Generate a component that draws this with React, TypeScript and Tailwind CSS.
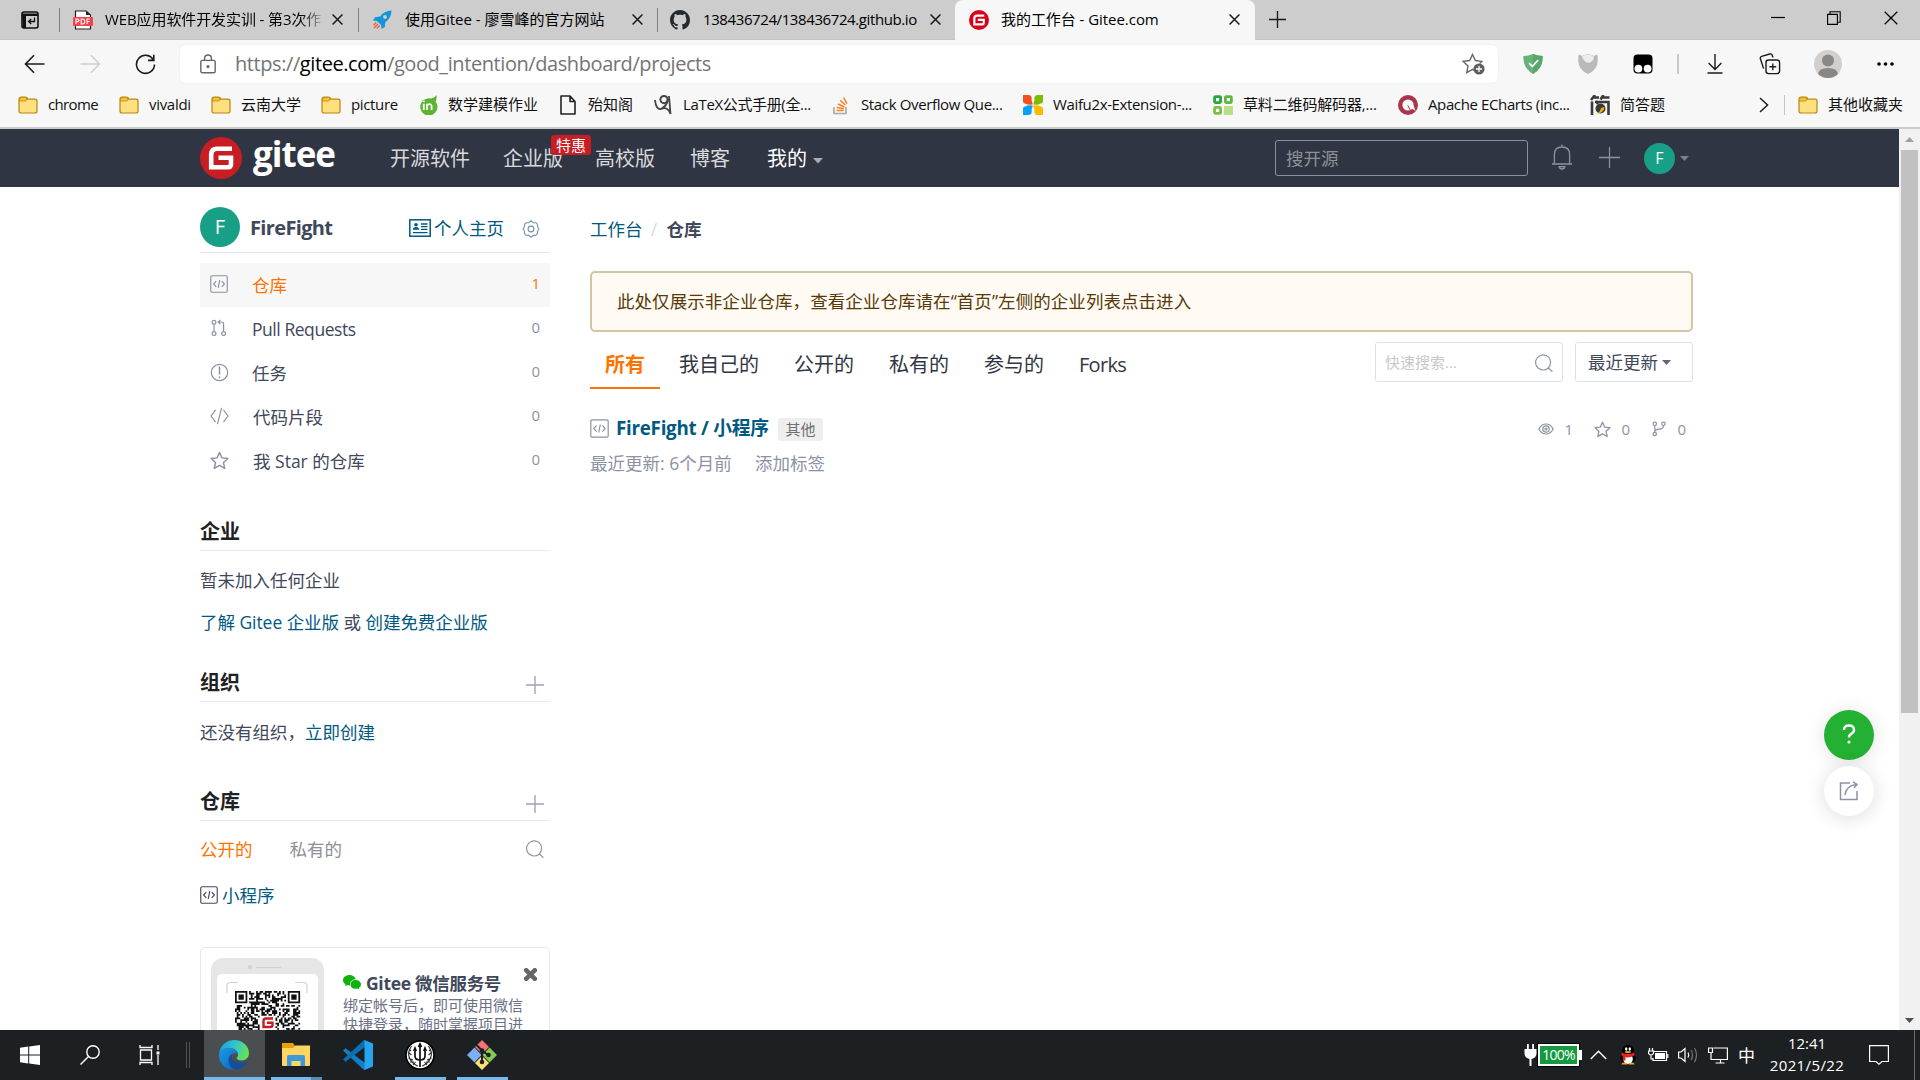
import React from 'react';

type Kids = { children?: React.ReactNode; className?: string };

const FolderIcon = () => (
  <svg width="20" height="18" viewBox="0 0 20 18" className="shrink-0">
    <path d="M1 3.2Q1 1 3.2 1H7.2Q9.4 1 9.4 2.8V3.2H17Q19 3.2 19 5V15Q19 17 17 17H3Q1 17 1 15Z" fill="#ffe07f" stroke="#b8860f" strokeWidth="1.2" />
    <path d="M1.6 3.2Q1.6 1.6 3.2 1.6H7Q8.8 1.6 8.8 3Q8.8 5 7 5H1.6Z" fill="#fcc537" stroke="#b8860f" strokeWidth=".8" />
  </svg>
);

const GiteeMark = ({ size, bg }: { size: number; bg: string }) => (
  <svg width={size} height={size} viewBox="0 0 42 42" className="shrink-0">
    <circle cx="21" cy="21" r="21" fill={bg} />
    <path d="M32 11.800H17Q11.200 11.800 11.200 17.600V30.200H28Q31 30.200 31 27V20.800H18.500" fill="none" stroke="#fff" strokeWidth="4.600" />
  </svg>
);

const PdfIcon = () => (
  <svg width="20" height="20" viewBox="0 0 20 20" className="shrink-0">
    <path d="M2.5 1H13L17.5 5V19H2.5Z" fill="#fff" stroke="#222" strokeWidth="1.2" />
    <path d="M13 1V5H17.5Z" fill="#222" />
    <rect x="0" y="7" width="20" height="9" rx="1" fill="#f4434a" />
    <path d="M3 14V9H4.7Q6 9 6 10.3T4.7 11.6H3M8.2 9V14H9.4Q11.7 14 11.7 11.5T9.4 9ZM14 14V9H17M14 11.5H16.6" fill="none" stroke="#fff" strokeWidth="1.1" />
  </svg>
);

const RocketIcon = () => (
  <svg width="20" height="20" viewBox="0 0 20 20" className="shrink-0">
    <path d="M19.5 .5Q12 .8 8 6.5L3 7.2L1 10.5L5 11L9 15L9.6 19L12.8 17L13.5 12Q19.5 8 19.5 .5Z" fill="#1296db" />
    <circle cx="13" cy="7" r="1.9" fill="#cdcdcd" />
    <path d="M4.2 12.5L1.5 15.2M6 14L2 18M7.6 15.6L5 18.4" stroke="#e8603c" strokeWidth="1.4" />
  </svg>
);

const GithubIcon = () => (
  <svg width="20" height="20" viewBox="0 0 16 16" className="shrink-0">
    <path fill="#24292e" d="M8 0C3.58 0 0 3.58 0 8c0 3.54 2.29 6.53 5.47 7.59.4.07.55-.17.55-.38 0-.19-.01-.82-.01-1.49-2.01.37-2.53-.49-2.69-.94-.09-.23-.48-.94-.82-1.13-.28-.15-.68-.52-.01-.53.63-.01 1.08.58 1.23.82.72 1.21 1.87.87 2.33.66.07-.52.28-.87.51-1.07-1.78-.2-3.64-.89-3.64-3.95 0-.87.31-1.59.82-2.15-.08-.2-.36-1.02.08-2.12 0 0 .67-.21 2.2.82.64-.18 1.32-.27 2-.27s1.36.09 2 .27c1.53-1.04 2.2-.82 2.2-.82.44 1.1.16 1.92.08 2.12.51.56.82 1.27.82 2.15 0 3.07-1.87 3.75-3.65 3.95.29.25.54.73.54 1.48 0 1.07-.01 1.93-.01 2.2 0 .21.15.46.55.38A8.01 8.01 0 0 0 16 8c0-4.42-3.58-8-8-8Z" />
  </svg>
);

const Cross = ({ s = 11, c = '#1b1b1b', w = 1.4 }: { s?: number; c?: string; w?: number }) => (
  <svg width={s} height={s} viewBox="0 0 10 10" className="shrink-0"><path d="M.5 .5L9.5 9.5M9.5 .5L.5 9.5" stroke={c} strokeWidth={w} fill="none" /></svg>
);

const Plus = ({ s, c, w = 1.3 }: { s: number; c: string; w?: number }) => (
  <svg width={s} height={s} viewBox="0 0 20 20" className="shrink-0"><path d="M10 0V20M0 10H20" stroke={c} strokeWidth={w} /></svg>
);

const Search = ({ s = 18, c = '#9095a5' }: { s?: number; c?: string }) => (
  <svg width={s} height={s} viewBox="0 0 18 18" className="shrink-0"><path d="M15.6 8.2A7.5 7.5 0 1 1 11.5 1.5M11.5 1.5A7.5 7.5 0 0 1 15.6 8.2M13.2 13.4L17.4 17.4" transform="translate(0 .3)" fill="none" stroke={c} strokeWidth="1.2" /></svg>
);

const Caret = ({ w, c }: { w: number; c: string }) => (
  <svg width={w} height={w / 2 + 0.5} viewBox="0 0 10 5.5" className="shrink-0"><path d="M0 0H10L5 5.5Z" fill={c} /></svg>
);

const RepoIcon = ({ c, s = 19 }: { c: string; s?: number }) => (
  <svg width={s} height={s} viewBox="0 0 19 19" fill="none" stroke={c} strokeWidth="1.2" className="shrink-0">
    <rect x=".8" y=".8" width="17.4" height="17.4" rx="1.5" />
    <path d="M6.6 6.4L3.8 9.5L6.6 12.6M12.4 6.4L15.2 9.5L12.4 12.6M10.3 5.5L8.7 13.5" />
  </svg>
);

const Star = ({ s, c }: { s: number; c: string }) => (
  <svg width={s} height={s} viewBox="0 0 20 20" className="shrink-0"><path d="M10 1.5L12.6 7.2L18.8 7.9L14.2 12.1L15.5 18.3L10 15.1L4.5 18.3L5.8 12.1L1.2 7.9L7.4 7.2Z" fill="none" stroke={c} strokeWidth="1.5" strokeLinejoin="round" /></svg>
);

/* ---------- browser tabs ---------- */

const VLine = () => <div className="h-6 w-px shrink-0 bg-[#7f7f7f]" />;

const TabStrip = () => (
  <div className="flex h-10 shrink-0 items-center border-b border-[#c4c4c4] bg-[#cdcdcd] text-[15px] text-black">
    <div className="flex w-[59px] shrink-0 pl-[21px]">
      <svg width="18" height="18" viewBox="0 0 18 18"><rect x="1" y="1" width="16" height="16" rx="2" fill="none" stroke="#111" strokeWidth="1.6" /><path d="M1 2.5H17V5H5V17H2Z" fill="#111" /><path d="M13.5 6.5V10.5H8M10.2 8L7.6 10.5L10.2 13" fill="none" stroke="#111" strokeWidth="1.3" /></svg>
    </div>
    <VLine />
    <div className="flex w-[298px] shrink-0 items-center pl-[13px]">
      <PdfIcon />
      <div className="ml-3 w-[218px] whitespace-nowrap bg-gradient-to-r from-black from-88% to-[#bbb] bg-clip-text tracking-[-0.1px] text-transparent">WEB应用软件开发实训 - 第3次作</div>
      <div className="ml-[9px] flex"><Cross /></div>
    </div>
    <VLine />
    <div className="flex w-[298px] shrink-0 items-center pl-[13px]">
      <RocketIcon />
      <div className="ml-[13px] w-[227px] whitespace-nowrap">使用Gitee - 廖雪峰的官方网站</div>
      <Cross />
    </div>
    <VLine />
    <div className="flex w-[297px] shrink-0 items-center pl-3">
      <GithubIcon />
      <div className="ml-[13px] w-[227px] whitespace-nowrap tracking-[-0.4px]">138436724/138436724.github.io</div>
      <Cross />
    </div>
    <div className="-mb-px flex h-10 w-[300px] shrink-0 items-center rounded-t-lg bg-[#f7f7f7] pb-px pl-[14px]">
      <GiteeMark size={20} bg="#d9001b" />
      <div className="ml-3 w-[228px] whitespace-nowrap tracking-[-0.05px]">我的工作台 - Gitee.com</div>
      <Cross />
    </div>
    <div className="ml-[14px] flex"><Plus s={17} c="#1b1b1b" w={1.6} /></div>
    <div className="ml-auto flex items-start pb-[3px]">
      <svg width="14" height="14" className="mr-[42px]"><path d="M0 6.5H14" stroke="#000" strokeWidth="1.2" /></svg>
      <svg width="14" height="14" className="mr-[43px]" fill="none" stroke="#000" strokeWidth="1.1"><path d="M.6 3.4H10.4V13.4H.6ZM3 3.2V.8H13.2V11.2H10.6" /></svg>
      <div className="mr-[22px] flex"><Cross s={14} w={0.9} c="#000" /></div>
    </div>
  </div>
);

/* ---------- address bar ---------- */

const AddressBar = () => (
  <div className="flex h-[48px] shrink-0 items-center">
    <svg width="21" height="20" viewBox="0 0 21 20" className="ml-6 shrink-0" fill="none" stroke="#1b1b1b" strokeWidth="1.6"><path d="M20.5 10H1.5M10 1.2L1.5 10L10 18.8" /></svg>
    <svg width="21" height="20" viewBox="0 0 21 20" className="ml-[35px] shrink-0" fill="none" stroke="#cfcfcf" strokeWidth="1.6"><path d="M.5 10H19.5M11 1.2L19.5 10L11 18.8" /></svg>
    <svg width="21" height="21" viewBox="0 0 21 21" className="ml-[34px] shrink-0" fill="none" stroke="#1b1b1b" strokeWidth="1.6"><path d="M18.5 6.2A9 9 0 1 0 19.5 10.5M18.8 .8V6.4H13" /></svg>
    <div className="ml-[24px] flex h-[38px] w-[1318px] shrink-0 items-center rounded-md bg-white shadow-[0_0_2px_rgba(0,0,0,0.08)]">
      <svg width="16" height="20" viewBox="0 0 16 20" className="ml-5 shrink-0" fill="none" stroke="#666" strokeWidth="1.4"><rect x=".8" y="6.4" width="14.4" height="12.4" rx="1.5" /><path d="M4.6 6.4V4.2Q4.6 1 8 1T11.4 4.2V6.4" /><circle cx="8" cy="12.6" r=".9" fill="#666" /></svg>
      <div className="ml-[19px] whitespace-nowrap text-[20px] tracking-[-0.42px] text-[#747474]">https://<span className="text-black">gitee.com</span>/good_intention/dashboard/projects</div>
      <svg width="23" height="22" viewBox="0 0 23 22" className="ml-auto mr-[13px] shrink-0"><path d="M12 17.5L10.5 16.4L4.8 19.6L6 13L1.2 8.4L7.6 7.5L10.5 1.5L13.4 7.5L19.8 8.4L17.6 10.5" fill="none" stroke="#666" strokeWidth="1.4" /><circle cx="17" cy="16" r="5.6" fill="#5f5f5f" /><path d="M17 13V19M14 16H20" stroke="#fff" strokeWidth="1.3" /></svg>
    </div>
    <svg width="20" height="20" viewBox="0 0 20 20" className="ml-[25px] shrink-0"><path d="M10 0Q15 2 19.6 2Q20.5 14 10 20Q-.5 14 .4 2Q5 2 10 0Z" fill="#67b279" /><path d="M10 0Q15 2 19.6 2Q20.5 14 10 20Z" fill="#5aa76d" /><path d="M6 9L9.3 12.6L15.2 6" fill="none" stroke="#fff" strokeWidth="1.7" /></svg>
    <svg width="20" height="20" viewBox="0 0 20 20" className="ml-[35px] shrink-0"><path d="M.4 4Q-.2 1 1.5 .5L4 2Q10 -1.500 16 2L18.500 .5Q20.200 1 19.600 4Q21 15 10 20Q-1 15 .4 4Z" fill="#b9b9b9" /><path d="M4 2.200Q10 -.5 15.500 2Q16.500 7 11.500 8.800Q6 9 4 2.200Z" fill="#ededed" /></svg>
    <svg width="20" height="20" viewBox="0 0 20 20" className="ml-[35px] shrink-0"><rect x=".5" y=".5" width="19" height="19" rx="4" fill="#000" /><circle cx="5.4" cy="14.6" r="3.9" fill="#fff" /><circle cx="14.6" cy="14.6" r="3.9" fill="#fff" /></svg>
    <div className="ml-6 h-5 w-0.5 shrink-0 bg-[#c9c9c9]" />
    <svg width="16" height="20" viewBox="0 0 16 20" className="ml-7 shrink-0" fill="none" stroke="#1b1b1b" strokeWidth="1.4"><path d="M8 0V15M1.6 9L8 15.4L14.4 9M.5 19H15.5" /></svg>
    <svg width="22" height="22" viewBox="0 0 22 22" className="ml-[36px] shrink-0" fill="none" stroke="#1b1b1b" strokeWidth="1.4"><rect x="7" y="7" width="13.6" height="13.6" rx="2.5" /><path d="M13.8 10.4V17.2M10.4 13.8H17.2M4.6 15.6L1.4 5.8Q.8 4 2.6 3.3L10.8 1Q12.6.5 13.2 2.3L14 4.6" /></svg>
    <svg width="28" height="28" viewBox="0 0 28 28" className="ml-[33px] shrink-0"><circle cx="14" cy="14" r="14" fill="#d2cfcc" /><circle cx="14" cy="10.5" r="6" fill="#8a8683" /><path d="M4 24Q5 18 14 18T24 24Q20 28 14 28T4 24Z" fill="#8a8683" /></svg>
    <svg width="17" height="4" className="ml-[35px] shrink-0"><circle cx="2" cy="2" r="1.8" /><circle cx="8.5" cy="2" r="1.8" /><circle cx="15" cy="2" r="1.8" /></svg>
  </div>
);

/* ---------- bookmarks ---------- */

const Mark = ({ icon, w, children, className = '' }: { icon: React.ReactNode; w: string; children: React.ReactNode; className?: string }) => (
  <div className={`flex h-full shrink-0 items-center ${w}`}>
    <span className="mr-[10px] flex w-5 shrink-0 justify-center">{icon}</span>
    <span className={`whitespace-nowrap pb-px ${className}`}>{children}</span>
  </div>
);

const Bookmarks = () => (
  <div className="flex h-[41px] shrink-0 items-center border-b-2 border-[#cbcbcb] bg-[#f7f7f7] pb-[5px] pl-[18px] text-[15px] text-[#111]">
    <Mark w="w-[101px]" icon={<FolderIcon />} className="tracking-[-0.65px]">chrome</Mark>
    <Mark w="w-[92px]" icon={<FolderIcon />} className="tracking-[-0.3px]">vivaldi</Mark>
    <Mark w="w-[110px]" icon={<FolderIcon />}>云南大学</Mark>
    <Mark w="w-[97px]" icon={<FolderIcon />} className="tracking-[-0.35px]">picture</Mark>
    <Mark w="w-[140px]" icon={<svg width="20" height="20" viewBox="0 0 20 20"><path d="M18.5 0Q19 4 17.5 6.5A8.6 8.6 0 1 1 12.5 3.5Q16 3.5 18.5 0Z" fill="#5cb531" /><path d="M5.8 8.8V15M5.8 5.8V7.2M9 15V8.8M9 11Q9.4 9.2 11.4 9.2T13.6 11.4V15" fill="none" stroke="#fff" strokeWidth="1.8" /></svg>}>数学建模作业</Mark>
    <Mark w="w-[95px]" icon={<svg width="16" height="20" viewBox="0 0 16 20" fill="none" stroke="#222" strokeWidth="1.6"><path d="M1 1H10L15 6.5V19H1ZM10 1V6.5H15" strokeLinejoin="round" /></svg>}>殆知阁</Mark>
    <Mark w="w-[178px]" className="tracking-[-0.35px]" icon={<svg width="18" height="20" viewBox="0 0 18 20" fill="none" stroke="#444" strokeWidth="2"><circle cx="10" cy="4.6" r="3.6" /><path d="M14 4Q13 11 7 14Q2 15 1 5M7 14Q14 11 16.5 19M15 1L16.5 19" strokeWidth="1.8" /></svg>}>LaTeX公式手册(全...</Mark>
    <Mark w="w-[192px]" className="tracking-[-0.36px]" icon={<svg width="16" height="20" viewBox="0 0 16 20" fill="none"><path d="M1 12V18.5H13V12" stroke="#a7a9ac" strokeWidth="1.6" /><path d="M3.6 15.6H10.6M3.8 12.4L10.8 13.8M5 9L11.4 12M7.2 5.4L12.4 10M10.6 2.6L14 8.6" stroke="#f48024" strokeWidth="1.5" /></svg>}>Stack Overflow Que...</Mark>
    <Mark w="w-[190px]" className="tracking-[-0.36px]" icon={<svg width="20" height="20" viewBox="0 0 20 20"><path d="M0 0H6Q9.600 1 8.500 5Q10 9.600 9.600 9.600Q4 10 2.500 8.500Q0 9 0 6Z" fill="#f25022" /><path d="M20 0H14Q10.400 1 11.500 5Q10 9.600 10.400 9.600Q16 10 17.500 8.500Q20 9 20 6Z" fill="#7fba00" /><path d="M0 20H6Q9.600 19 8.500 15Q10 10.400 9.600 10.400Q4 10 2.500 11.500Q0 11 0 14Z" fill="#00a4ef" /><path d="M20 20H14Q10.400 19 11.500 15Q10 10.400 10.400 10.400Q16 10 17.500 11.500Q20 11 20 14Z" fill="#ffb900" /></svg>}>Waifu2x-Extension-...</Mark>
    <Mark w="w-[185px]" className="tracking-[-0.15px]" icon={<svg width="20" height="20" viewBox="0 0 20 20" fill="none" strokeWidth="2.800"><rect x="1.600" y="1.600" width="6" height="6" rx="1" stroke="#27a53f" /><rect x="12.400" y="1.600" width="6" height="6" rx="1" stroke="#5db83a" /><rect x="1.600" y="12.400" width="6" height="6" rx="1" stroke="#7cc142" /><rect x="11" y="11" width="9" height="9" rx="1" fill="#b9de8a" /></svg>}>草料二维码解码器,...</Mark>
    <Mark w="w-[192px]" className="tracking-[-0.38px]" icon={<svg width="20" height="20" viewBox="0 0 20 20"><circle cx="10" cy="10" r="10" fill="#aa344d" /><circle cx="10" cy="10" r="5.6" fill="#f7f7f7" /><path d="M9.5 10.5L15.5 10.5L17.5 16Z" fill="#fff" /><path d="M9.8 10.4L12.4 15.4" stroke="#aa344d" strokeWidth="1" /></svg>}>Apache ECharts (inc...</Mark>
    <Mark w="w-[167px]" icon={<svg width="20" height="20" viewBox="0 0 20 20" fill="none" stroke="#3a3a3a" strokeWidth="2.600"><path d="M5 0L1 5M3 2.500H9M13.500 0L10.500 4.500M12 2.500H19.500M2 6.500V20M5 7H18.500V20M6 6L8 9" /><circle cx="10.500" cy="13.500" r="5" fill="#3a3a3a" stroke="none" /><path d="M6 19Q10 18 11 13L14.500 12Q14 18 6 19Z" fill="#f2b200" stroke="none" /></svg>}>简答题</Mark>
    <svg width="10" height="16" viewBox="0 0 10 16" className="ml-[2px] shrink-0" fill="none" stroke="#1b1b1b" strokeWidth="1.5"><path d="M1 1L8.6 8L1 15" /></svg>
    <div className="ml-[15px] mr-[13px] h-5 w-px shrink-0 bg-[#c4c4c4]" />
    <Mark w="w-[110px]" icon={<FolderIcon />}>其他收藏夹</Mark>
  </div>
);

/* ---------- site header ---------- */

const SiteHeader = () => (
  <div className="flex h-[58px] shrink-0 items-center bg-[#2f3542] pl-[200px] text-[20px] text-[#d8d9dc]">
    <GiteeMark size={42} bg="#c71d23" />
    <div className="-mt-[9px] ml-[11px] w-[137px] text-[35px] font-bold leading-none tracking-[-1px] text-white">gitee</div>
    <div className="w-[113px] pt-[2px]">开源软件</div>
    <div className="flex w-[92px] items-start pt-[2px]">
      企业版
      <span className="relative z-10 -ml-3 -mt-[9px] flex h-5 w-10 shrink-0 items-center justify-center rounded-[3px] bg-[#c71d23] text-[15px] text-white">特惠</span>
    </div>
    <div className="w-[95px] pt-[2px]">高校版</div>
    <div className="w-[77px] pt-[2px]">博客</div>
    <div className="pt-[2px] text-white">我的</div>
    <div className="ml-[6px] mt-[6px] flex"><Caret w={10} c="#a9acb5" /></div>
    <div className="ml-[452px] flex h-[36px] w-[253px] shrink-0 items-center rounded-[3px] border border-[#8c92a4] pl-[10px] text-[17.5px] text-[#8f9197]">搜开源</div>
    <svg width="20" height="26" viewBox="0 0 20 26" className="-mt-[2px] ml-6 shrink-0" fill="none" stroke="#8c92a4" strokeWidth="1.3"><path d="M0 20H20M2.400 20V10.500Q2.400 3 10 3T17.600 10.500V20M10 3V.6M7.200 22.600Q7.500 25 10 25T12.800 22.600Z" /></svg>
    <div className="-mt-px ml-[27px] flex"><Plus s={21} c="#8c92a4" w={1.2} /></div>
    <div className="ml-6 flex size-[31px] shrink-0 items-center justify-center rounded-full bg-[#17a086] text-[16px] text-white">F</div>
    <div className="ml-[5px] flex"><Caret w={9} c="#7a8194" /></div>
  </div>
);

/* ---------- sidebar ---------- */

const NavRow = ({ icon, label, n, active, className = '' }: { icon: React.ReactNode; label: string; n: number; active?: boolean; className?: string }) => (
  <div className={`flex h-11 items-center pl-[10px] pr-[10px] ${active ? 'bg-[#f7f7f7] text-[#fe7300]' : 'text-[#40485b]'}`}>
    <span className="flex w-[42px] pb-[2px]">{icon}</span>
    <span className={`pt-px ${className}`}>{label}</span>
    <span className={`ml-auto pb-1 text-[15px] ${active ? '' : 'text-[#8c92a4]'}`}>{n}</span>
  </div>
);

const Heading = ({ title, plus, className = '' }: { title: string; plus?: boolean; className?: string }) => (
  <div className={`flex h-[38px] shrink-0 items-center border-b border-[#e3e9ed] pr-[6px] text-[20px] font-bold text-[#212121] ${className}`}>
    {title}
    {plus && <span className="ml-auto flex pt-[5px]"><Plus s={18} c="#9da2b3" w={1.5} /></span>}
  </div>
);

const MODULES = 37;
const isFinder = (x: number, y: number) => {
  const fx = x > MODULES / 2 ? MODULES - 1 - x : x;
  if (fx > 7 || y > 7) return null;
  if (fx === 7 || y === 7) return false;
  const d = Math.max(Math.abs(fx - 3), Math.abs(y - 3));
  return d !== 2;
};
const qrPath = () => {
  let d = '';
  let seed = 20210522;
  for (let y = 0; y < 24; y++) {
    for (let x = 0; x < MODULES; x++) {
      seed = (seed * 1103515245 + 12345) % 2147483648;
      const f = isFinder(x, y);
      const on = f === null ? seed / 2147483648 > 0.47 : f;
      if (on && !(x > 13 && x < 23 && y > 13)) d += `M${x} ${y}h1v1h-1z`;
    }
  }
  return d;
};

const WechatCard = () => (
  <div className="mt-[39px] flex h-[160px] shrink-0 items-start rounded-[5px] border border-[#e3e9ed] pl-[10px] pt-[10px]">
    <div className="h-[200px] w-[113px] shrink-0 rounded-t-[12px] bg-[#e6e6e6] pl-[6px] pt-2">
      <div className="ml-[31px] flex h-[2px] items-center gap-1"><span className="size-1 rounded-full bg-[#d0d0d0]" /><span className="h-px w-[25px] bg-[#d0d0d0]" /></div>
      <svg width="101" height="100" viewBox="0 0 101 100" className="mt-[6px] rounded-t-[5px] bg-white">
        <path d="M10 19V12Q10 8.500 13.500 8.500H21M78 8.500H86Q90 8.500 90 12V19" fill="none" stroke="#cfcfcf" strokeWidth="1.200" />
        <path d={qrPath()} transform="translate(18 17) scale(1.76)" fill="#111" />
        <path d="M56 44.500H49Q46.500 44.500 46.500 47V53H53Q55.500 53 55.500 51V48.700H50" fill="none" stroke="#c71d23" strokeWidth="2.400" />
      </svg>
    </div>
    <div className="ml-[19px] w-[181px] pt-3">
      <div className="flex h-[26px] items-center text-[17.5px] font-bold tracking-[-0.3px] text-[#40485b]">
        <svg width="18" height="16" viewBox="0 0 18 16" className="mr-[5px] shrink-0"><path d="M6.500 0C2.900 0 0 2.300 0 5.200C0 6.900 1 8.300 2.500 9.300L1.900 11.200L4.200 10.100Q5.300 10.400 6.500 10.400L7 10.300C6.500 6.700 9.500 4.300 12.800 4.300C12.200 1.800 9.600 0 6.500 0Z" fill="#0eb30e" /><path d="M12.600 5C9.600 5 7.500 7 7.500 9.400S9.700 13.800 12.600 13.800Q13.600 13.800 14.400 13.500L16.400 14.600L15.900 12.900Q18 11.600 18 9.400C18 7 15.600 5 12.600 5Z" fill="#0eb30e" /></svg>
        Gitee 微信服务号
      </div>
      <div className="whitespace-nowrap text-[15px] leading-[19px] text-[#6b7185]">绑定帐号后，即可使用微信<br />快捷登录，随时掌握项目进</div>
    </div>
    <div className="flex pt-[10px]"><Cross s={13} w={3.4} c="#666" /></div>
  </div>
);

const Sidebar = () => (
  <div className="flex w-[350px] shrink-0 flex-col text-[17.5px] text-[#40485b]">
    <div className="flex h-[66px] shrink-0 items-center border-b border-[#dfe7ee] pt-[14px]">
      <div className="flex size-10 shrink-0 items-center justify-center rounded-full bg-[#17a086] text-[20px] text-white">F</div>
      <div className="ml-[10px] w-[159px] pt-[2px] text-[20px] font-bold tracking-[-0.65px]">FireFight</div>
      <svg width="22" height="18" viewBox="0 0 22 18" className="mt-[3px] shrink-0" fill="none" stroke="#005980"><rect x=".8" y=".8" width="20.4" height="16.4" strokeWidth="1.500" /><circle cx="7" cy="5.800" r="1.800" fill="#005980" stroke="none" /><path d="M3.800 10.800Q4 8 7 8T10.200 10.800Z" fill="#005980" stroke="none" /><path d="M12 5H18.500M12 7.700H18.500M12 10.400H18.500M3.800 13.600H18.500" strokeWidth="1.300" /></svg>
      <div className="ml-[3px] pt-[3px] text-[#005980]">个人主页</div>
      <svg width="18" height="18" viewBox="0 0 18 18" className="ml-[18px] mt-[4px] shrink-0" fill="none" stroke="#6f93a8" strokeWidth="1.100"><path d="M9 .8L11.200 2.600L14 2.800L15.500 4.400L15.600 7L17 9L15.600 11L15.500 13.600L14 15.200L11.200 15.400L9 17.200L6.800 15.400L4 15.200L2.500 13.600L2.400 11L1 9L2.400 7L2.500 4.400L4 2.800L6.800 2.600Z" strokeLinejoin="round" /><circle cx="9" cy="9" r="2.900" /></svg>
    </div>
    <div className="mt-[10px] shrink-0">
      <NavRow active icon={<RepoIcon s={18} c="#8c92a4" />} label="仓库" n={1} />
      <NavRow icon={<svg width="18" height="18" viewBox="0 0 18 18" fill="none" stroke="#8c92a4" strokeWidth="1.200"><circle cx="4" cy="3.200" r="1.900" /><circle cx="4" cy="14.600" r="1.900" /><circle cx="13.600" cy="14.600" r="1.900" /><path d="M4 5.200V12.600M13.600 12.600V5Q13.600 3 11.600 3H8M10.400 .8L8.200 3L10.400 5.200" /></svg>} label="Pull Requests" n={0} className="tracking-[-0.45px]" />
      <NavRow icon={<svg width="19" height="19" viewBox="0 0 19 19" fill="none" stroke="#8c92a4" strokeWidth="1.200"><circle cx="9.500" cy="9.500" r="8.200" /><path d="M9.500 3.600V11.500M9.500 13.500V15.200" strokeWidth="1.500" /></svg>} label="任务" n={0} />
      <NavRow icon={<svg width="19" height="18" viewBox="0 0 19 18" fill="none" stroke="#8c92a4" strokeWidth="1.200"><path d="M5.500 2.800L1 9L5.500 15.200M13.500 2.800L18 9L13.500 15.200M11.600 .8L7.400 17.200" /></svg>} label="代码片段" n={0} className="pl-px" />
      <NavRow icon={<Star s={19} c="#8c92a4" />} label="我 Star 的仓库" n={0} className="pl-px" />
    </div>
    <Heading title="企业" className="mt-[30px]" />
    <div className="mt-4 h-[26px] shrink-0 leading-[26px]">暂未加入任何企业</div>
    <div className="mt-4 h-[26px] shrink-0 tracking-[-0.05px] leading-[26px]"><span className="text-[#005980]">了解 Gitee 企业版</span> 或 <span className="text-[#005980]">创建免费企业版</span></div>
    <Heading title="组织" plus className="mt-[29px]" />
    <div className="mt-[17px] h-[26px] shrink-0 leading-[26px]">还没有组织，<span className="text-[#005980]">立即创建</span></div>
    <Heading title="仓库" plus className="mt-[38px]" />
    <div className="mt-[15px] flex h-[26px] shrink-0 items-center">
      <span className="text-[#fe7300]">公开的</span>
      <span className="ml-[37px] text-[#8c8f96]">私有的</span>
      <span className="ml-auto mr-[6px] flex"><Search c="#8f97a3" /></span>
    </div>
    <div className="mt-5 flex h-[26px] shrink-0 items-center"><RepoIcon c="#40485b" s={18} /><span className="ml-1 text-[#005980]">小程序</span></div>
    <WechatCard />
  </div>
);

/* ---------- main column ---------- */

const TabItem = ({ children, className = '' }: Kids) => <div className={`flex h-12 shrink-0 items-center ${className}`}>{children}</div>;

const Main = () => (
  <div className="ml-10 flex w-[1103px] shrink-0 flex-col text-[17.5px]">
    <div className="mt-[28px] flex h-7 items-center text-[#40485b]">
      <span className="text-[#005980]">工作台</span>
      <span className="mx-[7px] w-[9px] text-center text-[#d5d7da]">/</span>
      <span className="ml-px font-bold">仓库</span>
    </div>
    <div className="mt-[28px] flex h-[61px] w-[1103px] items-center rounded-[5px] border-2 border-[#d3c4a4] bg-[#fffaf3] pl-[25px] tracking-[0.06px] text-[#573a08]">此处仅展示非企业仓库，查看企业仓库请在“首页”左侧的企业列表点击进入</div>
    <div className="mt-[9px] flex h-12 items-start text-[20px] text-[#303643]">
      <TabItem className="w-[70px] justify-center border-b-2 border-[#fe7300] pt-[2px] font-bold text-[#fe7300]">所有</TabItem>
      <TabItem className="ml-[19px] w-[115px]">我自己的</TabItem>
      <TabItem className="w-[95px]">公开的</TabItem>
      <TabItem className="w-[95px]">私有的</TabItem>
      <TabItem className="w-[95px]">参与的</TabItem>
      <TabItem className="tracking-[-0.7px]">Forks</TabItem>
      <div className="ml-auto mt-px flex h-10 w-[188px] shrink-0 items-center rounded-[3px] border border-[#dce3e8] pl-[9px] pr-[9px] text-[15px] text-[#c7c7c7]">快速搜索...<span className="ml-auto flex pt-px"><Search /></span></div>
      <div className="ml-3 mt-px flex h-10 w-[118px] shrink-0 items-center rounded-[3px] border border-[#dce3e8] pl-3 pt-px text-[17.5px] text-[#40485b]">最近更新<span className="ml-1 flex"><Caret w={9} c="#60677c" /></span></div>
    </div>
    <div className="mt-[25px] flex h-[28px] items-center">
      <RepoIcon c="#8c92a4" />
      <div className="ml-[7px] w-[162px] whitespace-nowrap text-[18.75px] font-bold tracking-[-0.25px] text-[#005980]">FireFight / 小程序</div>
      <div className="mt-[2px] flex h-[23px] w-[45px] items-center justify-center rounded-[3px] bg-[#eee] text-[15px] text-[#6f7075]">其他</div>
      <div className="ml-auto mt-[2px] flex items-center text-[15px] text-[#8c92a4]">
        <svg width="16" height="12" viewBox="0 0 16 12" fill="none" stroke="#8c92a4" strokeWidth="1.200"><path d="M.8 6Q3.500 1 8 1T15.200 6Q12.500 11 8 11T.8 6Z" /><circle cx="8" cy="6" r="3.200" /><circle cx="8" cy="6" r="1" /></svg>
        <span className="ml-[10px] w-[30px]">1</span>
        <Star s={17} c="#8c92a4" />
        <span className="ml-[10px] w-[31px]">0</span>
        <svg width="14" height="16" viewBox="0 0 14 16" fill="none" stroke="#8c92a4" strokeWidth="1.200"><circle cx="2.800" cy="2.800" r="1.700" /><circle cx="2.800" cy="13" r="1.700" /><circle cx="11.500" cy="2.800" r="1.700" /><path d="M2.800 4.500V11.300M11.500 4.500Q11.500 8 7 8.200Q2.800 8.500 2.800 11" /></svg>
        <span className="ml-[11px] mr-[7px]">0</span>
      </div>
    </div>
    <div className="mt-2 flex h-[26px] items-center text-[#8c92a4]"><span className="w-[165px] whitespace-nowrap">最近更新: 6个月前</span><span>添加标签</span></div>
  </div>
);

const ScrollBar = () => (
  <div className="flex w-[21px] shrink-0 flex-col items-center bg-[#f1f1f1]">
    <div className="flex h-[21px] items-center"><svg width="9" height="5"><path d="M0 5H9L4.500 0Z" fill="#a0a0a0" /></svg></div>
    <div className="h-[563px] w-[17px] bg-[#c1c1c1]" />
    <div className="mt-auto flex h-[19px] items-center"><svg width="9" height="5"><path d="M0 0H9L4.500 5Z" fill="#505050" /></svg></div>
  </div>
);

const FloatButtons = () => (
  <div className="absolute left-[1824px] top-[710px] flex flex-col gap-[6px]">
    <div className="flex size-[50px] items-center justify-center rounded-full bg-[#24b033] shadow-[0_2px_20px_rgba(0,0,0,0.12)]">
      <svg width="14" height="20" viewBox="0 0 14 20" className="-mt-[3px]"><path d="M2 6Q2 1.500 7 1.500T12 6Q12 8.300 9.500 9.600Q7 11 7 13.500" fill="none" stroke="#fff" strokeWidth="2.400" /><circle cx="7" cy="18" r="1.600" fill="#fff" /></svg>
    </div>
    <div className="flex size-[50px] items-center justify-center rounded-full bg-white shadow-[0_2px_20px_rgba(0,0,0,0.14)]">
      <svg width="20" height="20" viewBox="0 0 20 20" fill="none" stroke="#8c92a4" strokeWidth="1.500"><path d="M11 2H1.500V18.500H18V10M6 14Q7 5 17 3.600M14 .8L18 3.500L15 7" /></svg>
    </div>
  </div>
);

/* ---------- taskbar ---------- */

const EdgeLogo = () => (
  <svg width="30" height="30" viewBox="0 0 30 30">
    <defs>
      <linearGradient id="edgeTop" x1="0" y1="0.3" x2="1" y2="0.6"><stop offset="0" stopColor="#1a9fe0" /><stop offset=".5" stopColor="#35c8c8" /><stop offset="1" stopColor="#6be34c" /></linearGradient>
      <linearGradient id="edgeLow" x1="0" y1="0" x2="1" y2="1"><stop offset="0" stopColor="#1b9de2" /><stop offset="1" stopColor="#0a63bb" /></linearGradient>
    </defs>
    <path d="M.2 13.500C1 5.500 7.500 0 15 0C24 0 30 6.500 30 13C30 17.800 26.500 20.500 22.500 20.500C19 20.500 17.500 19 17.600 18.300C17.800 17.500 19 17 19 14.500C19 10.500 14 7.500 9 8C4.500 8.300 1.500 11 .2 13.500Z" fill="url(#edgeTop)" />
    <path d="M0 15.500C0 10.500 4 7.800 9 7.800C14.500 7.800 19 10.500 19 14.500C16 11.500 10 14.500 10 20C10 25 14 30 15 30C7 30 0 24 0 15.500Z" fill="url(#edgeLow)" />
    <path d="M12.500 14C9 16.500 8.500 22 11.500 26C14 29.500 17.500 30 20 29C24 27.700 27 24.500 28.200 22.200C28.400 21.700 28 21.300 27.400 21.600C20 25 13.500 21.500 12.500 17.500Z" fill="#124f9e" />
  </svg>
);

const TridentIcon = () => (
  <svg width="30" height="30" viewBox="0 0 30 30" fill="none" stroke="#fff">
    <circle cx="15" cy="15" r="14" fill="#fff" stroke="#000" strokeWidth="1.600" />
    <path d="M15 5V27M10 10V16Q10 20 15 20T20 16V10M13.500 7L15 4L16.500 7M8.800 11L10 8L11.200 11M18.800 11L20 8L21.200 11" stroke="#111" strokeWidth="1.700" />
    <path d="M6.500 6Q0 15 8 23Q11 25.500 13 26M23.500 6Q30 15 22 23Q19 25.500 17 26M3 12L6.500 15M3.500 18L8 20M27 12L23.500 15M26.500 18L22 20M8 25L10.500 22M22 25L19.500 22M4 9L6 11M26 9L24 11M5 22L9 22M25 22L21 22" stroke="#333" strokeWidth="1.100" />
  </svg>
);

const Cell = ({ children, className = '' }: Kids) => <div className={`flex h-[50px] shrink-0 flex-col items-center ${className}`}>{children}</div>;

const Taskbar = () => (
  <div className="flex h-[50px] shrink-0 items-center bg-[#1c2022] text-white">
    <svg width="20" height="20" viewBox="0 0 20 20" className="ml-5 shrink-0" fill="#fff"><path d="M0 2.800L8.200 1.600V9.500H0ZM9.200 1.500L20 0V9.500H9.200ZM0 10.500H8.200V18.400L0 17.200ZM9.200 10.500H20V20L9.200 18.500Z" /></svg>
    <svg width="20" height="20" viewBox="0 0 20 20" className="ml-10 shrink-0" fill="none" stroke="#fff" strokeWidth="1.400"><circle cx="13" cy="7" r="6.200" /><path d="M8.500 11.500L.5 19.500" /></svg>
    <svg width="21" height="20" viewBox="0 0 21 20" className="ml-[39px] shrink-0" fill="none" stroke="#fff" strokeWidth="1.300"><path d="M1.500 5H12.500V15H1.500ZM1 0V2.500H13V0M1 20V17.500H13V20M19 0V5M19 10V20" /><rect x="17.500" y="6.500" width="3" height="3" fill="#fff" stroke="none" /></svg>
    <div className="ml-[26px] mr-[14px] h-[26px] w-1 shrink-0 border-x border-[#4c5052]" />
    <Cell className="w-[61px] bg-[#4b4e50]"><div className="mr-[2px] mt-[10px] flex h-[37px]"><EdgeLogo /></div><div className="h-[3px] w-full bg-[#76b9ed]" /></Cell>
    <Cell className="ml-[6px] w-[51px]">
      <div className="mr-[2px] mt-[12px] flex h-[35px]"><svg width="28" height="24" viewBox="0 0 28 24"><path d="M0 1H11L13 4H28V12H0Z" fill="#e8a200" /><path d="M0 6H11L13.500 3.500H28V23Q28 24 27 24H1Q0 24 0 23Z" fill="#ffd660" /><path d="M5 24V15Q5 13 7 13H21Q23 13 23 15V24H18.500V19H9.500V24Z" fill="#3f97dc" /></svg></div>
      <div className="flex h-[3px] w-full"><span className="w-10 bg-[#76b9ed]" /><span className="flex-1 bg-[#5a8db5]" /></div>
    </Cell>
    <Cell className="ml-[10px] w-[51px]"><div className="mt-[10px] flex h-[37px]"><svg width="30" height="30" viewBox="0 0 30 30"><path d="M0 10.500L2.500 8.300L22 23V30L20.500 29.500Z" fill="#1080c8" /><path d="M0 19.500L2.500 21.700L22 7V0L20.500 .5Z" fill="#0a6fb5" /><path d="M21.500 0L30 3.500V26.500L21.500 30V0Z" fill="#27a4ee" /></svg></div></Cell>
    <Cell className="ml-[12px] w-[51px]"><div className="mr-[2px] mt-[10px] flex h-[37px]"><TridentIcon /></div><div className="h-[3px] w-full bg-[#76b9ed]" /></Cell>
    <Cell className="ml-[11px] w-[51px]">
      <div className="mr-[2px] mt-[10px] flex h-[37px]"><svg width="30" height="30" viewBox="0 0 30 30"><path d="M15 0L22 7L15 14L8 7Z" fill="#f37374" /><path d="M7.500 7.500L14.500 15L7.500 22.500L0 15Z" fill="#7eaef8" /><path d="M22.500 7.500L30 15L22.500 22.500L15.500 15Z" fill="#83cd55" /><path d="M15 16L22 23L15 30L8 23Z" fill="#ffe173" /><path d="M9.500 5L15 10.500V23M15 10.500L21 15" stroke="#1c2022" strokeWidth="2" fill="none" /><circle cx="15" cy="10.500" r="2.300" fill="#1c2022" /><circle cx="21.500" cy="15" r="2.300" fill="#1c2022" /><circle cx="15" cy="22" r="2.300" fill="#1c2022" /></svg></div>
      <div className="h-[3px] w-full bg-[#76b9ed]" />
    </Cell>
    <svg width="13" height="22" viewBox="0 0 13 22" className="ml-auto shrink-0" fill="#fff"><path d="M3 0H4.800V5H8.200V0H10V5H12.500V10Q12 14 7.500 15V22H5.500V15Q1 14 .5 10V5H3Z" /></svg>
    <div className="ml-px flex h-[22px] w-[41px] shrink-0 items-center justify-center border-2 border-white bg-[#14993f] text-[14px] leading-none tracking-[-0.8px] outline-1 outline-black">100%</div>
    <div className="mr-2 h-[10px] w-[3px] shrink-0 bg-white" />
    <svg width="17" height="10" viewBox="0 0 17 10" className="shrink-0" fill="none" stroke="#fff" strokeWidth="1.500"><path d="M.8 9L8.500 1.200L16.200 9" /></svg>
    <svg width="16" height="20" viewBox="0 0 16 20" className="ml-[13px] shrink-0"><path d="M2.500 17Q-1.500 14 2 9V6Q2.500 0 8 0T14 6V9Q17.500 14 13.500 17Z" fill="#000" /><ellipse cx="8" cy="14" rx="4.800" ry="5" fill="#fff" /><path d="M1.800 7.500Q8 11 14.200 7.500L14.600 10.500Q8 13.500 5.500 12V15.500H3V11L1.400 10.500Z" fill="#e0222a" /><ellipse cx="6.200" cy="4" rx="1.200" ry="1.700" fill="#fff" /><ellipse cx="9.800" cy="4" rx="1.200" ry="1.700" fill="#fff" /><ellipse cx="8" cy="7" rx="3.200" ry="1.100" fill="#f7a81b" /><path d="M1.500 19.500Q1.500 17.500 5 17.500Q7.500 18 7.500 19.500ZM8.500 19.500Q8.500 18 11 17.500Q14.500 17.500 14.500 19.500Z" fill="#f7a81b" /></svg>
    <svg width="21" height="14" viewBox="0 0 21 14" className="ml-3 shrink-0" fill="none" stroke="#fff" strokeWidth="1.200"><path d="M6 3.500H18.500V12.500H5V10" /><rect x="7" y="5" width="10" height="6" fill="#fff" stroke="none" /><path d="M19.800 6V10M1.500 0V3M4.500 0V3M.5 3H5.500V5Q5 7 3 7T.5 5ZM3 7V11H5" /></svg>
    <svg width="20" height="16" viewBox="0 0 20 16" className="ml-[9px] shrink-0" fill="none" stroke="#fff" strokeWidth="1.200"><path d="M.6 5V11H3L7 14.500V1.500L3 5ZM10 5.500Q11.500 8 10 10.500" /><path d="M13 3Q16 8 13 13M16.500 1Q20.500 8 16.500 15" stroke="#777" /></svg>
    <svg width="20" height="17" viewBox="0 0 20 17" className="ml-[10px] shrink-0" fill="none" stroke="#fff" strokeWidth="1.200"><path d="M5.500 1H19.400V12.500H3V6M12.500 12.500V16M7.500 16H16.500M.5 1H4.500V5.500H.5Z" /></svg>
    <div className="ml-[10px] w-[17px] shrink-0 text-[17px] leading-none">中</div>
    <div className="ml-[12px] flex w-[80px] shrink-0 flex-col items-center pb-[2px] text-[15px] leading-[22px]"><span>12:41</span><span className="tracking-[0.4px]">2021/5/22</span></div>
    <svg width="20" height="20" viewBox="0 0 20 20" className="ml-[22px] shrink-0" fill="none" stroke="#fff" strokeWidth="1.200"><path d="M.6 .6H19.400V16.500H13L10 19.200L7 16.500H.6Z" /></svg>
    <div className="ml-[25px] mr-[5px] h-[50px] w-px shrink-0 bg-[#6a6d6f]" />
  </div>
);

export default function App() {
  return (
    <div lang="zh-CN" className="relative flex h-[1080px] w-[1920px] flex-col overflow-hidden bg-[#f7f7f7] font-[390] font-['Open_Sans','Noto_Sans_CJK_SC',sans-serif]">
      <TabStrip />
      <AddressBar />
      <Bookmarks />
      <div className="flex h-[901px] shrink-0 overflow-hidden bg-white">
        <div className="flex w-[1899px] shrink-0 flex-col overflow-hidden">
          <SiteHeader />
          <div className="flex h-[843px] shrink-0 pl-[200px]">
            <Sidebar />
            <Main />
          </div>
        </div>
        <ScrollBar />
      </div>
      <Taskbar />
      <FloatButtons />
    </div>
  );
}
